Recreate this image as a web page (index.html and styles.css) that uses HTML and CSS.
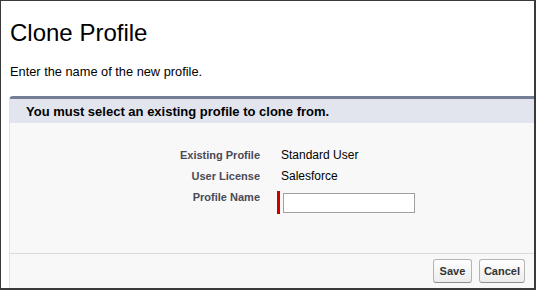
FILE: index.html
```html
<!DOCTYPE html>
<html lang="en">
<head>
    <meta charset="UTF-8">
    <meta name="viewport" content="width=device-width, initial-scale=1.0">
    <title>Clone Profile</title>
    <link rel="stylesheet" href="styles.css">
</head>
<body>
    <div class="frame">
        <div class="page-head">
            <h1 class="page-title">Clone Profile</h1>
            <p class="page-desc">Enter the name of the new profile.</p>
        </div>

        <div class="panel">
            <div class="panel-head">
                <h2 class="panel-title">You must select an existing profile to clone from.</h2>
            </div>
            <div class="panel-body">
                <div class="detail-list">
                    <span class="label">Existing Profile</span>
                    <span class="value">Standard User</span>
                    <span class="label">User License</span>
                    <span class="value">Salesforce</span>
                    <label class="label" for="profileName">Profile Name</label>
                    <div class="required-input">
                        <div class="required-block"></div>
                        <input type="text" class="text-input" id="profileName">
                    </div>
                </div>
            </div>
            <div class="panel-foot">
                <button class="btn">Save</button>
                <button class="btn">Cancel</button>
            </div>
        </div>
    </div>
</body>
</html>
```

FILE: styles.css
```css
* {
    box-sizing: border-box;
}
body {
    margin: 0;
    font-family: "Liberation Sans", Arial, sans-serif;
    color: #000;
}
.frame {
    width: 536px;
    height: 290px;
    overflow: hidden;
    background: #fff;
    border-style: solid;
    border-color: #3a3a3a;
    border-width: 1px 2px 2px 1px;
    display: flex;
    flex-direction: column;
}
.page-head {
    padding: 0 0 0 9px;
}
.page-title {
    margin: 18px 0 0;
    font-size: 24px;
    line-height: 28px;
    font-weight: normal;
}
.page-desc {
    margin: 18px 0 0;
    font-size: 12.8px;
    line-height: 14px;
}
.panel {
    flex: 1;
    margin: 17px -4px 0 8px;
    background: #f8f8f8;
    border-top: 3px solid #747e96;
    border-left: 1px solid #e0e3e5;
    border-top-left-radius: 4px;
    display: flex;
    flex-direction: column;
}
.panel-head {
    background: #e2e5ee;
    height: 24px;
    padding: 5px 0 0 16px;
}
.panel-title {
    margin: 0;
    font-size: 13px;
    line-height: 16px;
    font-weight: bold;
}
.panel-body {
    padding: 25px 0 39px;
    border-bottom: 1px solid #dbdbdb;
}
.detail-list {
    display: grid;
    grid-template-columns: 250px 1fr;
    column-gap: 21px;
    row-gap: 6px;
    align-items: start;
}
.label {
    text-align: right;
    font-size: 11px;
    line-height: 15px;
    font-weight: bold;
    color: #4a4a56;
}
.value {
    font-size: 12px;
    line-height: 15px;
}
.required-input {
    display: flex;
    align-items: center;
    gap: 3px;
    margin: 1px 0 0 -4px;
}
.required-block {
    width: 3px;
    height: 23px;
    background: #c00;
}
.text-input {
    width: 132px;
    height: 20px;
    border: 1px solid #a0a0a0;
    background: #fff;
    padding: 1px 3px;
    font-family: inherit;
    font-size: 12px;
    margin: 0;
}
.panel-foot {
    display: flex;
    justify-content: flex-end;
    gap: 7px;
    padding: 5px 13px 0 0;
}
.btn {
    min-width: 39px;
    height: 24px;
    padding: 0 4px;
    font-family: inherit;
    font-size: 11px;
    font-weight: bold;
    color: #333;
    background: linear-gradient(#ffffff, #ececec);
    border: 1px solid #b5b5b5;
    border-bottom-color: #8f8f8f;
    border-radius: 3px;
    cursor: pointer;
}
```
